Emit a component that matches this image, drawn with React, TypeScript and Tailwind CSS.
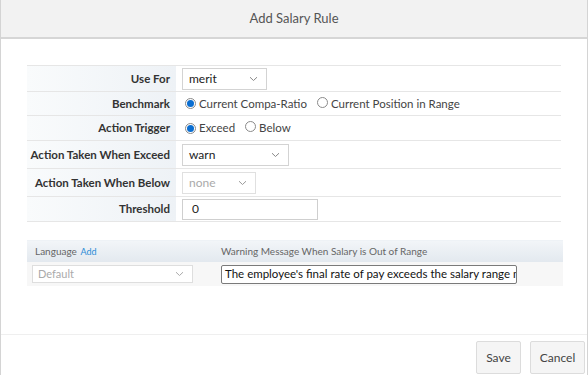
import React from "react";

const Chevron = ({ className = "" }: { className?: string }) => (
  <svg width="9" height="6" viewBox="0 0 9 6" className={className}>
    <path d="M1 1.2 L4.5 4.5 L8 1.2" fill="none" stroke="currentColor" strokeWidth="1" />
  </svg>
);

const Radio = ({ checked }: { checked?: boolean }) => (
  <span className="inline-flex items-center justify-center w-[11px] h-[11px] rounded-full border border-[#8a8a8a] bg-white">
    {checked && <span className="w-[7px] h-[7px] rounded-full bg-[#0a6ed1]" />}
  </span>
);

const Row = ({
  label,
  h,
  children,
}: {
  label: string;
  h: string;
  children: React.ReactNode;
}) => (
  <div className={`grid grid-cols-[151px_1fr] border-b border-[#e6e6e6] ${h}`}>
    <div className="flex items-center justify-end pr-[6px] bg-gradient-to-r from-[#f9fbfc] to-[#eef2f6] font-bold text-[11.5px] text-[#333] border-r-2 border-white whitespace-nowrap">
      {label}
    </div>
    <div className="flex items-center pl-[4px] bg-white">{children}</div>
  </div>
);

export default function App() {
  return (
    <div
      className="w-[588px] h-[375px] flex flex-col bg-white border-l border-r border-[#d4d4d4] overflow-hidden"
      style={{ fontFamily: 'Lato, "Liberation Sans", Arial, sans-serif' }}
    >
      <div className="h-[39px] shrink-0 bg-[#f2f2f2] border-b-2 border-[#d6d6d6] flex items-center justify-center text-[13px] text-[#555]">
        Add Salary Rule
      </div>

      <div className="flex-1 px-[26px] pt-[26px]">
        <div className="border-t border-[#e6e6e6]">
          <Row label="Use For" h="h-[26px]">
            <div className="w-[85px] h-[22px] border border-[#d3d3d3] flex items-center justify-between pl-[6px] pr-[8px] text-[12px] text-[#222]">
              <span>merit</span>
              <Chevron className="text-[#888]" />
            </div>
          </Row>
          <Row label="Benchmark" h="h-[24px]">
            <div className="flex items-center text-[11.5px] text-[#444] pl-[3px]">
              <Radio checked />
              <span className="ml-[3px]">Current Compa-Ratio</span>
              <span className="ml-[10px]">
                <Radio />
              </span>
              <span className="ml-[3px]">Current Position in Range</span>
            </div>
          </Row>
          <Row label="Action Trigger" h="h-[25px]">
            <div className="flex items-center text-[11.5px] text-[#444] pl-[3px]">
              <Radio checked />
              <span className="ml-[3px]">Exceed</span>
              <span className="ml-[10px]">
                <Radio />
              </span>
              <span className="ml-[3px]">Below</span>
            </div>
          </Row>
          <Row label="Action Taken When Exceed" h="h-[28px]">
            <div className="w-[107px] h-[22px] border border-[#d3d3d3] flex items-center justify-between pl-[6px] pr-[8px] text-[12px] text-[#222]">
              <span>warn</span>
              <Chevron className="text-[#888]" />
            </div>
          </Row>
          <Row label="Action Taken When Below" h="h-[28px]">
            <div className="w-[74px] h-[22px] border border-[#e0e0e0] flex items-center justify-between pl-[6px] pr-[8px] text-[12px] text-[#aaa]">
              <span>none</span>
              <Chevron className="text-[#999]" />
            </div>
          </Row>
          <Row label="Threshold" h="h-[25px]">
            <div className="w-[136px] h-[21px] border border-[#cfcfcf] flex items-center pl-[9px] text-[12px] text-[#222]">
              0
            </div>
          </Row>
        </div>

        <div className="mt-[18px] w-[536px]">
          <div className="h-[22px] bg-gradient-to-b from-[#f2f5f8] to-[#e3e9ef] border-t border-[#eef2f6] grid grid-cols-[186px_1fr] items-center text-[10px] text-[#666]">
            <div className="pl-[8px]">
              Language <span className="text-[#2a8cd6] text-[9px] ml-[1px]">Add</span>
            </div>
            <div className="pl-[8px]">Warning Message When Salary is Out of Range</div>
          </div>
          <div className="h-[24px] bg-[#f7f7f7] grid grid-cols-[186px_1fr] items-center">
            <div className="pl-[5px]">
              <div className="w-[161px] h-[18px] bg-white border border-[#dedede] flex items-center justify-between pl-[5px] pr-[8px] text-[11px] text-[#aaa]">
                <span>Default</span>
                <Chevron className="text-[#aaa]" />
              </div>
            </div>
            <div className="pl-[8px]">
              <div className="w-[296px] h-[19px] bg-white border border-[#7a7a7a] rounded-[2px] flex items-center pl-[3px] text-[11.5px] text-[#111] overflow-hidden whitespace-nowrap">
                The employee's final rate of pay exceeds the salary range maximum
              </div>
            </div>
          </div>
        </div>
      </div>

      <div className="h-[41px] shrink-0 border-t border-[#efefef] flex items-start justify-end gap-[9px] pt-[6px] pr-[2px]">
        <button className="w-[45px] h-[33px] bg-[#f5f5f5] border border-[#dcdcdc] rounded-[2px] text-[12px] text-[#444]">
          Save
        </button>
        <button className="w-[55px] h-[33px] bg-[#f5f5f5] border border-[#dcdcdc] rounded-[2px] text-[12px] text-[#444]">
          Cancel
        </button>
      </div>
    </div>
  );
}
